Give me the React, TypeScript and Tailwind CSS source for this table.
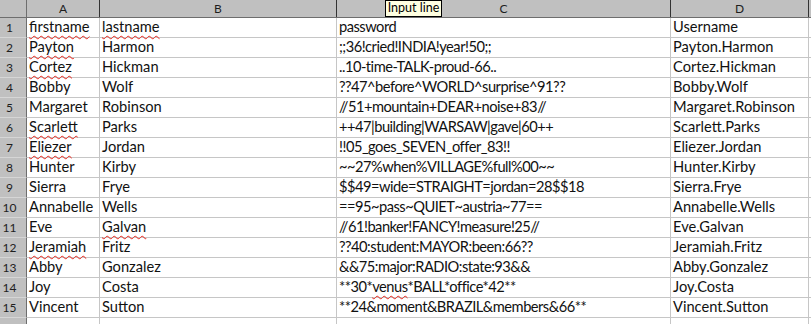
import React from "react";

type Row = [string, string, string, string];

const rows: Row[] = [
  ["firstname", "lastname", "password", "Username"],
  ["Payton", "Harmon", ";;36!cried!INDIA!year!50;;", "Payton.Harmon"],
  ["Cortez", "Hickman", "..10-time-TALK-proud-66..", "Cortez.Hickman"],
  ["Bobby", "Wolf", "??47^before^WORLD^surprise^91??", "Bobby.Wolf"],
  ["Margaret", "Robinson", "//51+mountain+DEAR+noise+83//", "Margaret.Robinson"],
  ["Scarlett", "Parks", "++47|building|WARSAW|gave|60++", "Scarlett.Parks"],
  ["Eliezer", "Jordan", "!!05_goes_SEVEN_offer_83!!", "Eliezer.Jordan"],
  ["Hunter", "Kirby", "~~27%when%VILLAGE%full%00~~", "Hunter.Kirby"],
  ["Sierra", "Frye", "$$49=wide=STRAIGHT=jordan=28$$18", "Sierra.Frye"],
  ["Annabelle", "Wells", "==95~pass~QUIET~austria~77==", "Annabelle.Wells"],
  ["Eve", "Galvan", "//61!banker!FANCY!measure!25//", "Eve.Galvan"],
  ["Jeramiah", "Fritz", "??40:student:MAYOR:been:66??", "Jeramiah.Fritz"],
  ["Abby", "Gonzalez", "&&75:major:RADIO:state:93&&", "Abby.Gonzalez"],
  ["Joy", "Costa", "**30*venus*BALL*office*42**", "Joy.Costa"],
  ["Vincent", "Sutton", "**24&moment&BRAZIL&members&66**", "Vincent.Sutton"],
  ["", "", "", ""],
];

const misspelled = new Set([
  "firstname",
  "lastname",
  "Payton",
  "Cortez",
  "Scarlett",
  "Eliezer",
  "Galvan",
  "Jeramiah",
]);

function Squiggle({ children }: { children: React.ReactNode }) {
  return (
    <span className="underline decoration-wavy decoration-[#e8261c] decoration-1 underline-offset-[3px]">
      {children}
    </span>
  );
}

function renderText(text: string) {
  if (misspelled.has(text)) return <Squiggle>{text}</Squiggle>;
  if (text.includes("venus")) {
    const [a, b] = text.split("venus");
    return (
      <>
        {a}
        <Squiggle>venus</Squiggle>
        {b}
      </>
    );
  }
  return text;
}

const cols = "grid grid-cols-[27px_73px_237px_334px_138px_1fr]";

export default function App() {
  return (
    <div
      className="relative w-[811px] h-[324px] overflow-hidden bg-white"
      style={{ fontFamily: "Lato, 'Liberation Sans', sans-serif" }}
    >
      {/* Column header */}
      <div className={`${cols} h-[18px] bg-[#c0c0c0] border-b border-[#6e6e6e] text-[12px] text-[#1e1e1e]`}>
        <div className="border-r border-[#6e6e6e]" />
        {["A", "B", "C", "D", ""].map((c, i) => (
          <div
            key={i}
            className={`flex items-center justify-center leading-none ${i < 4 ? "border-r border-[#333]" : ""}`}
          >
            {c}
          </div>
        ))}
      </div>

      {rows.map((r, ri) => (
        <div key={ri} className={`${cols} h-[20px]`}>
          <div className="flex items-end pb-[3px] bg-[#c0c0c0] border-r border-[#6e6e6e] border-b border-b-[#d6d6d6] text-[12px] text-[#1e1e1e] leading-none">
            <span className="w-[19px] text-center">{ri + 1}</span>
          </div>
          {r.map((t, ci) => (
            <div
              key={ci}
              className={`flex items-end pl-[2px] pb-[2px] border-r border-b border-[#c6c6c6] text-[14.667px] leading-[17px] text-[#111] whitespace-nowrap overflow-visible ${ci === 2 ? "tracking-[-0.5px]" : ""}`}
            >
              {renderText(t)}
            </div>
          ))}
          <div className="border-b border-[#c6c6c6]" />
        </div>
      ))}

      {/* Tooltip */}
      <div className="absolute left-[385px] top-0 h-[17px] w-[57px] bg-[#ffffe1] border border-black flex items-center justify-center text-[12.5px] leading-none text-black">
        Input line
      </div>
    </div>
  );
}
